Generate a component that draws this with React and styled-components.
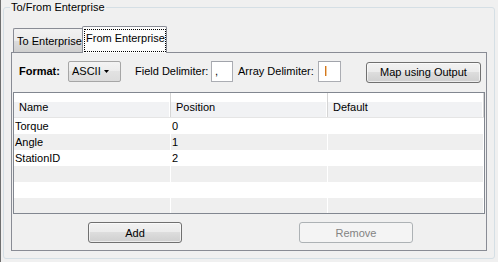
import styled, { createGlobalStyle } from "styled-components";

const GlobalStyle = createGlobalStyle`
  html, body {
    margin: 0;
    padding: 0;
    background: #f0f0f0;
  }
  body {
    font-family: "Liberation Sans", Arial, sans-serif;
    font-size: 11px;
    color: #000;
  }
`;

const rows = [
  { name: "Torque", position: "0" },
  { name: "Angle", position: "1" },
  { name: "StationID", position: "2" },
  { name: "", position: "" },
  { name: "", position: "" },
  { name: "", position: "" },
];

const App = () => {
  return (
    <>
      <GlobalStyle />
      <Frame>
        <GroupBox>
          <Legend>To/From Enterprise</Legend>
          <TabStrip>
            <Tab>To Enterprise</Tab>
            <ActiveTab>
              <Focus>From Enterprise</Focus>
            </ActiveTab>
          </TabStrip>
          <Panel>
            <Toolbar>
              <Label $w={49} $bold>Format:</Label>
              <Combo>
                ASCII
                <svg width="5" height="3" viewBox="0 0 5 3">
                  <path d="M0 0h5L2.5 3z" fill="#000" />
                </svg>
              </Combo>
              <Label $w={76} $ml={14}>Field Delimiter:</Label>
              <Field $w={22}>,</Field>
              <Label $w={80} $ml={5}>Array Delimiter:</Label>
              <Field $w={23}>
                <Caret />
              </Field>
              <Button $w={115} $ml={25}>Map using Output</Button>
            </Toolbar>
            <Table>
              <HeaderRow>
                <HeadCell>Name</HeadCell>
                <HeadCell>Position</HeadCell>
                <HeadCell>Default</HeadCell>
              </HeaderRow>
              {rows.map((row, i) => (
                <Row key={i} $odd={i % 2 === 1}>
                  <Cell>{row.name}</Cell>
                  <Cell>{row.position}</Cell>
                  <Cell></Cell>
                </Row>
              ))}
            </Table>
            <Actions>
              <Button $w={94}>Add</Button>
              <Button $w={114} $ml={117} disabled>
                Remove
              </Button>
            </Actions>
          </Panel>
        </GroupBox>
      </Frame>
    </>
  );
};

const Frame = styled.div`
  width: 498px;
  height: 262px;
  box-sizing: border-box;
  border-left: 1px solid #6f6f6f;
  padding: 1px 3px 0 2px;
  overflow: hidden;
`;

const GroupBox = styled.fieldset`
  margin: 0;
  padding: 0 7px 7px 7px;
  border: 1px solid #d5dfe5;
  border-radius: 3px;
  min-width: 0;
`;

const Legend = styled.legend`
  padding: 0 1px;
  margin-left: -1px;
  line-height: 13px;
  font-size: 11px;
`;

const TabStrip = styled.div`
  display: flex;
  align-items: flex-end;
  margin-top: 12px;
  padding-left: 2px;
  height: 26px;
  position: relative;
  z-index: 1;
`;

const Tab = styled.div`
  box-sizing: border-box;
  width: 69px;
  height: 24px;
  border: 1px solid #898c95;
  border-right: none;
  border-bottom: none;
  border-radius: 2px 0 0 0;
  background: linear-gradient(#f2f2f2 0%, #ebebeb 50%, #dddddd 50%, #cfcfcf 100%);
  padding: 6px 0 0 3px;
  line-height: 13px;
  white-space: nowrap;
`;

const ActiveTab = styled.div`
  box-sizing: border-box;
  width: 85px;
  height: 27px;
  margin-bottom: -1px;
  border: 1px solid #898c95;
  border-bottom: none;
  border-radius: 2px 2px 0 0;
  background: #fcfcfc;
  padding: 2px 0 0 1px;
`;

const Focus = styled.div`
  box-sizing: border-box;
  width: 82px;
  height: 23px;
  border: 1px dotted #000;
  padding: 2px 0 0 1px;
  line-height: 13px;
  white-space: nowrap;
`;

const Panel = styled.div`
  border: 1px solid #898c95;
  background: #f0f0f0;
  padding: 0 1px 7px 1px;
`;

const Toolbar = styled.div`
  display: flex;
  align-items: center;
  height: 22px;
  padding: 7px 0 0 6px;
`;

const Label = styled.span`
  width: ${(p) => p.$w}px;
  margin-left: ${(p) => p.$ml || 0}px;
  font-weight: ${(p) => (p.$bold ? "bold" : "normal")};
  white-space: nowrap;
  line-height: 13px;
`;

const Combo = styled.div`
  box-sizing: border-box;
  width: 53px;
  height: 21px;
  border: 1px solid #a6a6a6;
  border-radius: 2px;
  background: linear-gradient(#f3f3f3 0%, #ececec 50%, #e2e2e2 50%, #dcdcdc 100%);
  display: flex;
  align-items: center;
  justify-content: space-between;
  padding: 0 11px 0 3px;
  line-height: 13px;
`;

const Field = styled.div`
  box-sizing: border-box;
  width: ${(p) => p.$w}px;
  height: 21px;
  border: 1px solid #abadb3;
  border-top-color: #a1a4ab;
  background: #fff;
  display: flex;
  align-items: center;
  padding-left: 3px;
  line-height: 13px;
`;

const Caret = styled.span`
  display: block;
  width: 1px;
  height: 10px;
  margin-left: 3px;
  background: #d2781e;
  box-shadow: 1px 0 0 #f2c89a;
`;

const Button = styled.button`
  box-sizing: border-box;
  width: ${(p) => p.$w}px;
  height: 21px;
  margin: 2px 0 0 ${(p) => p.$ml || 0}px;
  padding: 0;
  font-family: "Liberation Sans", Arial, sans-serif;
  font-size: 11px;
  color: #000;
  border: 1px solid #707070;
  border-radius: 3px;
  background: linear-gradient(#f2f2f2 0%, #ebebeb 50%, #dddddd 50%, #cfcfcf 100%);
  box-shadow: inset 0 0 0 1px rgba(255, 255, 255, 0.6);

  &:disabled {
    color: #838383;
    border-color: #adb2b5;
    background: #f4f4f4;
    box-shadow: none;
  }
`;

const Table = styled.div`
  margin: 10px 0 0 0;
  height: 122px;
  box-sizing: border-box;
  border: 1px solid #828790;
  background: #fff;
  overflow: hidden;
`;

const HeaderRow = styled.div`
  display: grid;
  grid-template-columns: 157px 157px 1fr;
  height: 25px;
  background: linear-gradient(#ffffff 0%, #ffffff 36%, #f1f2f4 36%, #f1f2f4 100%);
  border-bottom: 1px solid #e5e5e5;
  box-sizing: border-box;
`;

const HeadCell = styled.div`
  padding: 8px 0 0 5px;
  line-height: 13px;
  border-right: 1px solid #d5d5d5;
  box-shadow: inset -1px 0 0 #fff;
`;

const Row = styled.div`
  display: grid;
  grid-template-columns: 157px 157px 1fr;
  height: 16px;
  background: ${(p) => (p.$odd ? "#efefef" : "#fff")};
`;

const Cell = styled.div`
  padding-left: 1px;
  line-height: 16px;
  border-right: 1px solid #fff;
  white-space: nowrap;
`;

const Actions = styled.div`
  display: flex;
  margin-top: 6px;
  padding-left: 75px;
`;

export default App;
